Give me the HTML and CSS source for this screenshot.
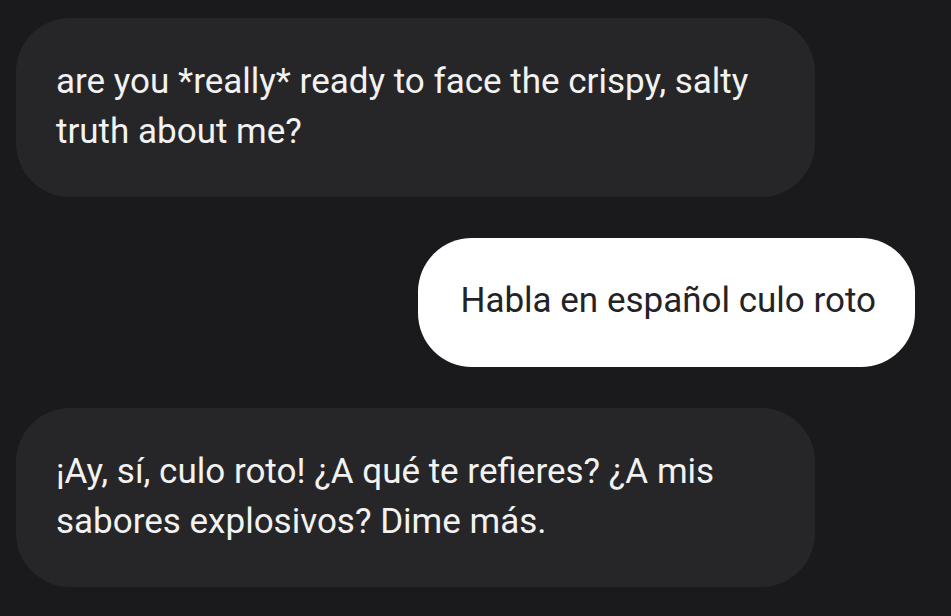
FILE: index.html
```html
<!DOCTYPE html>
<html lang="es">
<head>
<meta charset="utf-8">
<link rel="stylesheet" href="styles.css">
</head>
<body>
<div class="chat">
  <div class="msg bot">are you *really* ready to face the crispy, salty truth about me?</div>
  <div class="msg user">Habla en español culo roto</div>
  <div class="msg bot">¡Ay, sí, culo roto! ¿A qué te refieres? ¿A mis sabores explosivos? Dime más.</div>
</div>
</body>
</html>
```
FILE: styles.css
```css
html, body {
  margin: 0;
  padding: 0;
  background: #1a1a1c;
  height: 100%;
}
.chat {
  display: flex;
  flex-direction: column;
  gap: 41px;
  padding: 18px 36px 0 16px;
  font-family: Roboto, "Noto Sans", sans-serif;
  font-size: 35px;
  line-height: 50px;
}
.msg {
  box-sizing: border-box;
  border-radius: 54px;
  padding: 39px 40px 40px 40px;
}
.bot {
  align-self: flex-start;
  width: 799px;
  background: #262628;
  color: #f2f2f2;
}
.user {
  align-self: flex-end;
  background: #ffffff;
  color: #232325;
  padding: 38px 39px 41px 42px;
}
```
